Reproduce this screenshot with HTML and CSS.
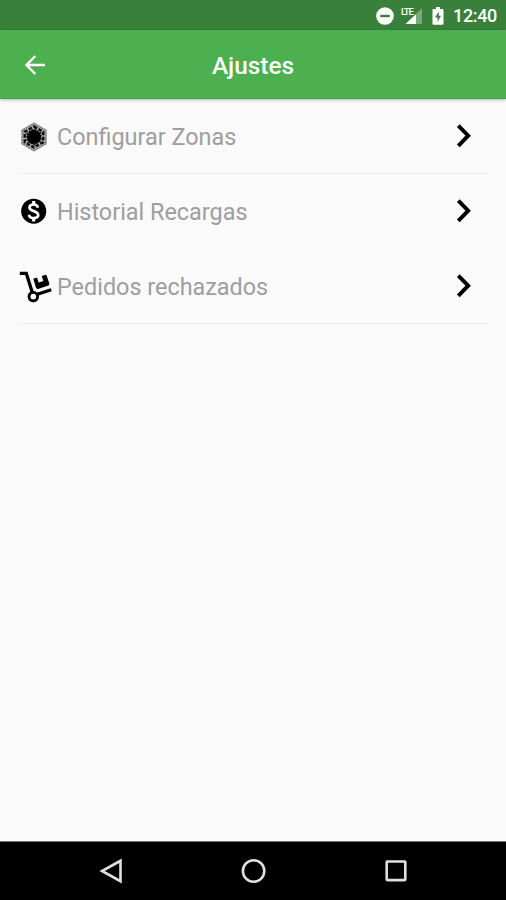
FILE: index.html
```html
<!DOCTYPE html>
<html lang="es">
<head>
<meta charset="utf-8">
<title>Ajustes</title>
<link rel="stylesheet" href="styles.css">
</head>
<body>
<div class="screen">
  <div class="status">
    <svg width="18" height="18" viewBox="0 0 18 18"><circle cx="9" cy="9" r="8.800" fill="#fff"/><path d="M4.200 9h9.600" stroke="#39813b" stroke-width="2.400"/></svg>
    <div class="signal">
      <span class="lte">LTE</span>
      <svg width="22" height="18" viewBox="0 0 22 18"><path d="M21 1v16H4.500Z" fill="#fff" opacity=".32"/><path d="M15 7.200V17H4.500Z" fill="#fff"/></svg>
    </div>
    <svg class="battery" width="12" height="18" viewBox="0 0 12 18"><path d="M1.500 2H4V0h4v2h2.500Q11.500 2 11.500 3v13.800q0 1-1 1h-9q-1 0-1-1V3q0-1 1-1Z" fill="#fff"/><path d="M6.800 4.500 3 10.500h2.500V15L9 8.800H6.800Z" fill="#39813b"/></svg>
    <span class="clock">12:40</span>
  </div>
  <header class="bar">
    <svg class="back" width="22" height="22" viewBox="0 0 22 22"><path d="M21 11H2.800M11.300 2 2.500 11l8.800 9" fill="none" stroke="#fff" stroke-width="2.400"/></svg>
    <h1>Ajustes</h1>
  </header>
  <main class="list">
    <div class="row">
      <svg class="icon" width="38" height="38" viewBox="0 0 38 38">
        <path d="M15 4.300 27.800 11.700v14.600L15 33.700 2.200 26.300V11.700Z" fill="#b0b0b0"/>
        <path d="M15 5.500 26.800 12.300v13.400L15 32.500 3.200 25.700V12.300Z" fill="none" stroke="#777" stroke-width="1.200" stroke-dasharray="2 1"/>
        <path d="M15 8.500 24.200 13.800v10.400L15 29.500 5.800 24.200V13.800Z" fill="none" stroke="#111" stroke-width="2.600" stroke-dasharray="3.600 1.600"/>
        <path d="M15 11.500 21.500 15.300v7.400L15 26.500 8.500 22.700v-7.400Z" fill="none" stroke="#111" stroke-width="2" stroke-dasharray="2 1"/>
        <circle cx="15" cy="19" r="6.900" fill="#000"/>
      </svg>
      <span class="label">Configurar Zonas</span>
      <svg class="chevron" width="18" height="26" viewBox="0 0 18 26"><path d="M3.300 2.600 13.200 12.700 3.300 22.800" fill="none" stroke="#000" stroke-width="3.900"/></svg>
    </div>
    <div class="row faint">
      <svg class="icon" width="38" height="38" viewBox="0 0 38 38">
        <circle cx="14.700" cy="18.200" r="12.500" fill="#000"/>
        <path d="M18.700 14.800c-.1-2.200-1.700-3.300-4-3.300-2.400 0-4.200 1.100-4.200 3.100 0 4.600 8.700 2.500 8.700 7.500 0 2-1.800 3-4.500 3s-4.500-1.200-4.600-3.300" fill="none" stroke="#fff" stroke-width="2.700"/>
        <path d="M14.700 8v3.500M14.700 25v3.500" stroke="#fff" stroke-width="3.200"/>
      </svg>
      <span class="label">Historial Recargas</span>
      <svg class="chevron" width="18" height="26" viewBox="0 0 18 26"><path d="M3.300 2.600 13.200 12.700 3.300 22.800" fill="none" stroke="#000" stroke-width="3.900"/></svg>
    </div>
    <div class="row">
      <svg class="icon" width="38" height="38" viewBox="0 0 38 38">
        <path d="M.8 5.300H7.300L13.300 24.500M18.500 26.300 32.200 21.700" fill="none" stroke="#000" stroke-width="3.300"/>
        <circle cx="14.300" cy="28.600" r="4.300" fill="#fafafa" stroke="#000" stroke-width="2.800"/>
        <path d="M14.300 10.700 18 9.500 19.700 14.500 24.400 13 22.700 8 26 6.900Q27.400 6.700 27.800 8L30.300 15.500Q30.600 17 29.400 17.500L19 20.900Q17.500 21.200 17 19.800Z" fill="#000"/>
      </svg>
      <span class="label">Pedidos rechazados</span>
      <svg class="chevron" width="18" height="26" viewBox="0 0 18 26"><path d="M3.300 2.600 13.200 12.700 3.300 22.800" fill="none" stroke="#000" stroke-width="3.900"/></svg>
    </div>
  </main>
  <nav class="nav">
    <svg width="26" height="26" viewBox="0 0 26 26"><path d="M22.500 2.800v20.400L4 13Z"/></svg>
    <svg width="26" height="26" viewBox="0 0 26 26"><circle cx="12.600" cy="13" r="10.700"/></svg>
    <svg width="26" height="26" viewBox="0 0 26 26"><rect x="3.700" y="3.500" width="18.600" height="18.600" rx=".5"/></svg>
  </nav>
</div>
</body>
</html>
```
FILE: styles.css
```css
* { box-sizing: border-box; }
body { margin: 0; font-family: Roboto, "Liberation Sans", sans-serif; }
svg { display: block; flex: none; }
.screen {
  width: 506px;
  height: 900px;
  display: flex;
  flex-direction: column;
  background: #fafafa;
  overflow: hidden;
}
.status {
  height: 30px;
  flex: none;
  display: flex;
  align-items: center;
  justify-content: flex-end;
  padding: 1px 9px 0 0;
  background: #39813b;
  color: #fff;
}
.signal { position: relative; margin-left: 7px; }
.lte {
  position: absolute;
  left: 0;
  top: 0;
  font-size: 9.5px;
  line-height: 9px;
  font-weight: 500;
  letter-spacing: -1.1px;
}
.battery { margin-left: 9px; }
.clock {
  width: 44px;
  margin-left: 9px;
  font-size: 18px;
  line-height: 20px;
  font-weight: 500;
  letter-spacing: -.35px;
  white-space: nowrap;
}
.bar {
  height: 69px;
  flex: none;
  display: grid;
  grid-template-columns: 60px 1fr 60px;
  align-items: center;
  background: #4caf50;
  border-bottom: 1px solid #3da542;
  box-shadow: 0 1px 3px rgba(0, 0, 0, .28);
  color: #fff;
}
.back { margin: 1px 0 0 24px; }
h1 {
  margin: 4px 0 0;
  text-align: center;
  font-size: 24.4px;
  line-height: 30px;
  font-weight: 500;
}
.list { flex: 1; padding: 0 18px 0 19px; }
.row {
  height: 75px;
  display: flex;
  align-items: center;
  padding-top: 1px;
  border-bottom: 1px solid #ededed;
}
.faint { border-bottom-color: #f8f8f8; }
.label {
  flex: 1;
  font-size: 23.4px;
  line-height: 30px;
  color: #9e9e9e;
}
.chevron { margin: 0 15px 2px 0; }
.nav {
  height: 59px;
  flex: none;
  display: flex;
  justify-content: space-between;
  align-items: center;
  padding: 0 97px 0 98px;
  background: #000;
  border-top: 1px solid #777;
}
.nav svg { fill: none; stroke: #e0e0e0; stroke-width: 2.6; }
```
